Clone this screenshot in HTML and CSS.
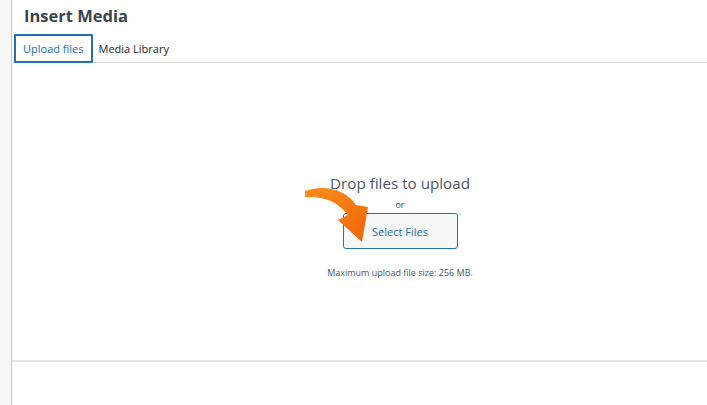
FILE: index.html
```html
<!DOCTYPE html>
<html>
<head>
<meta charset="utf-8">
<link rel="stylesheet" href="styles.css">
</head>
<body>
<div class="layout">
  <div class="sidebar"></div>
  <div class="frame">
    <h1 class="title">Insert Media</h1>
    <div class="tabs">
      <a class="tab active">Upload files</a>
      <a class="tab">Media Library</a>
    </div>
    <div class="uploader">
      <div class="inner">
        <p class="drop">Drop files to upload</p>
        <p class="or">or</p>
        <div class="btn-wrap">
          <button class="select">Select Files</button>
          <svg class="arrow" width="75" height="72" viewBox="0 0 75 72">
            <defs>
              <linearGradient id="g" x1="0" y1="0" x2="1" y2="1">
                <stop offset="0" stop-color="#fb8d1e"/>
                <stop offset="1" stop-color="#f06606"/>
              </linearGradient>
            </defs>
            <path d="M5 10 C25 3 46 9 56 24 L68 26 L62 61 L38 39 L48 34 C38 21 25 15 5 16 Z" fill="url(#g)"/>
          </svg>
        </div>
        <p class="max">Maximum upload file size: 256 MB.</p>
      </div>
    </div>
    <div class="footer"></div>
  </div>
</div>
</body>
</html>
```
FILE: styles.css
```css
html, body {
  margin: 0;
  padding: 0;
  overflow: hidden;
  background: #fff;
}
body {
  font-family: "Open Sans", "Noto Sans", sans-serif;
  color: #3c434a;
}
.layout {
  display: flex;
  height: 405px;
}
.sidebar {
  width: 11px;
  flex: none;
  background: #f6f7f7;
  border-right: 1px solid #c8cacc;
}
.frame {
  flex: 1;
  min-width: 0;
  display: flex;
  flex-direction: column;
}
.title {
  margin: 0;
  padding: 4px 0 0 12px;
  height: 30px;
  box-sizing: border-box;
  font-size: 16.5px;
  font-weight: 700;
  color: #3c434a;
  line-height: 24px;
}
.tabs {
  display: flex;
  padding-left: 2px;
  height: 33px;
  box-sizing: border-box;
  padding-top: 4px;
  border-bottom: 1px solid #dcdcde;
}
.tab {
  display: block;
  padding: 0 6px 0 4px;
  height: 29px;
  line-height: 26px;
  font-size: 11px;
  color: #1d2327;
  box-sizing: border-box;
  border: 2px solid transparent;
}
.tab.active {
  padding: 0 7px 0 7px;
  color: #2271b1;
  border-color: #2271b1;
  border-radius: 1px;
}
.uploader {
  height: 297px;
  display: flex;
  justify-content: center;
  padding-left: 81px;
}
.inner {
  padding-top: 109px;
  display: flex;
  flex-direction: column;
  align-items: center;
}
.drop {
  margin: 0;
  font-size: 15.2px;
  line-height: 22px;
  color: #50575e;
  white-space: nowrap;
}
.or {
  margin: 5px 0 0;
  font-size: 9px;
  line-height: 12px;
  color: #3c434a;
}
.btn-wrap {
  position: relative;
  margin-top: 2px;
}
.select {
  display: block;
  width: 115px;
  height: 36px;
  background: #f6f7f7;
  border: 1px solid #2271b1;
  border-radius: 3px;
  color: #2271b1;
  font-family: "Open Sans", "Noto Sans", sans-serif;
  font-size: 11px;
}
.arrow {
  position: absolute;
  left: -43px;
  top: -32px;
}
.max {
  margin: 18px 0 0;
  font-size: 9px;
  line-height: 12px;
  color: #50575e;
  white-space: nowrap;
}
.footer {
  border-top: 2px solid #e4e5e6;
  flex: 1;
}
```
